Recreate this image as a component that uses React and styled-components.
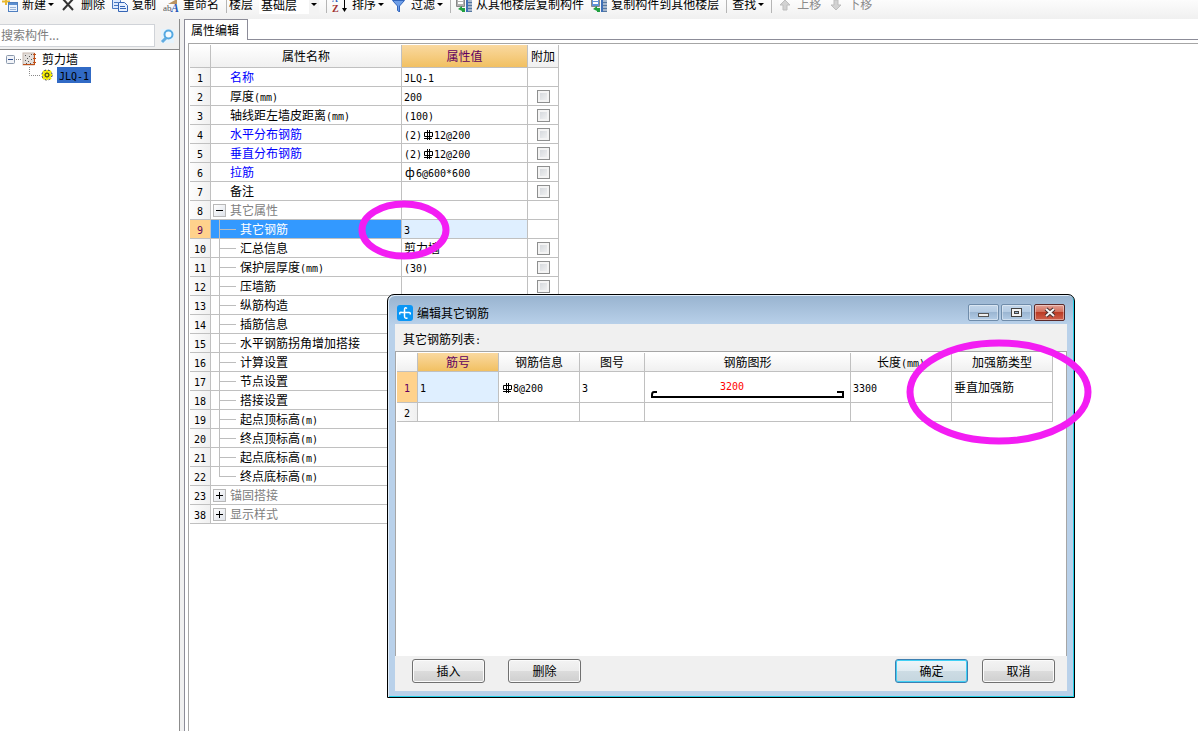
import React, { useState } from 'react';
import styled, { createGlobalStyle, css } from 'styled-components';

const GlobalStyle = createGlobalStyle`
  * {
    box-sizing: border-box;
  }

  body {
    margin: 0;
    overflow: hidden;
    background: #fff;
    color: #000;
    font-family: 'Noto Sans CJK SC', sans-serif;
    font-size: 12px;
    line-height: 18px;
  }

  button, input, select {
    font: inherit;
    color: inherit;
  }
`;

// Latin text and digits take half of the width of a Chinese character
const Half = styled.span`
  font-family: 'DejaVu Sans Mono', monospace;
  font-size: 10px;
  line-height: 10px;
`;

const Wide = styled.span`
  display: inline-block;
  width: 12px;
  text-align: center;
`;

const Page = styled.div`
  position: relative;
  display: flex;
  flex-direction: column;
  height: 100vh;
  overflow: hidden;
`;

// Toolbar
const Toolbar = styled.div`
  flex: none;
  display: flex;
  align-items: flex-start;
  gap: 7px;
  height: 25px;
  margin-top: -6px;
  padding: 1px 0 0 2px;
  background: linear-gradient(#fdfdfd 20%, #f0f0f0);
  white-space: nowrap;
`;

const ToolButton = styled.button`
  display: flex;
  align-items: center;
  gap: 4px;
  height: 18px;
  padding: 0;
  border: none;
  background: none;
  color: ${(p) => (p.disabled ? '#8a8a8a' : '#000')};

  svg {
    flex: none;
  }
`;

const Arrow = styled.span`
  margin-left: -2px;
  border: 3px solid transparent;
  border-top-color: #000;
  border-bottom: none;
`;

const Separator = styled.span`
  width: 1px;
  height: 18px;
  margin-right: -2px;
  background: #b5b5b5;
`;

const FloorField = styled.label`
  display: flex;
  gap: 6px;
  margin-left: -3px;
`;

const FloorBox = styled.span`
  display: flex;
  align-items: center;
  width: 60px;
  height: 19px;
  background: linear-gradient(90deg, #fff 50px, #f3f3f3 50px);
`;

const FloorSelect = styled.select`
  appearance: none;
  width: 54px;
  height: 18px;
  padding: 0 0 0 2px;
  border: none;
  background: none;
`;

// Main area
const Main = styled.div`
  flex: 1;
  display: flex;
  min-height: 0;
  background: #f0f0f0;
`;

const Sidebar = styled.aside`
  flex: none;
  display: flex;
  flex-direction: column;
  width: 180px;
  padding-top: 5px;
  border-right: 1px solid #8c8c8c;
`;

const SearchRow = styled.div`
  display: flex;
  height: 25px;
`;

const SearchInput = styled.input`
  width: 155px;
  height: 23px;
  padding: 0 0 2px 1px;
  border: 1px solid #d0d3d8;
  border-left: none;
  background: #fff;

  &::placeholder {
    color: #7d7d7d;
  }
`;

const SearchButton = styled.button`
  flex: 1;
  display: flex;
  align-items: center;
  padding: 0 0 2px 5px;
  border: none;
  background: none;
`;

const Tree = styled.ul`
  flex: 1;
  margin: 0;
  padding: 1px 0 0 6px;
  border-top: 1px solid #8c8c8c;
  background: #fff;
  list-style: none;
`;

const TreeItem = styled.li`
  display: flex;
  align-items: center;
  height: 16px;
  line-height: 16px;
`;

const TreeLabel = styled.span`
  margin-left: 4px;
  padding: 0 2px;
  background: ${(p) => (p.$selected ? '#316ac5' : 'none')};
`;

const Content = styled.section`
  flex: 1;
  display: flex;
  flex-direction: column;
  min-width: 0;
  margin-left: 4px;
  border-left: 1px solid #8c8c98;
  background: #fff;
`;

const TabBar = styled.div`
  flex: none;
  display: flex;
  height: 21px;

  &::after {
    content: '';
    flex: 1;
    border-bottom: 1px solid #8c8c98;
  }
`;

const Tab = styled.button`
  width: 63px;
  padding: 0 0 1px 6px;
  border: 1px solid #8c8c98;
  border-width: 1px 1px 0 0;
  background: #fff;
  text-align: left;
`;

const GridFrame = styled.div`
  flex: 1;
  margin: 3px 0 0 3px;
  padding: 1px 0 0 1px;
  border: 1px solid #a6a6a6;
  border-width: 1px 0 0 1px;
`;

// Tables
const Grid = styled.table`
  table-layout: fixed;
  width: ${(p) => p.$width}px;
  border-spacing: 0;
  background: #fff;
`;

const cell = css`
  padding: 0;
  border: 1px solid #c0c0c0;
  border-width: 0 1px 1px 0;
  font-weight: normal;
  white-space: nowrap;
  overflow: hidden;
`;

const HeadCell = styled.th`
  ${cell}
  height: ${(p) => p.$height}px;
  background: ${(p) => (p.$active ? 'linear-gradient(#fad9a0, #f1c062)' : 'linear-gradient(#fff, #f0f0f0)')};
  color: ${(p) => (p.$active ? '#600060' : '#000')};
`;

const RowHead = styled.th`
  ${cell}
  background: ${(p) => (p.$active ? '#ffd28c' : 'linear-gradient(90deg, #fdfdfd, #f0f0f0)')};
  color: ${(p) => (p.$active ? '#600060' : '#000')};
`;

const Cell = styled.td`
  ${cell}
  height: ${(p) => p.$height || 19}px;
  padding-left: 2px;
  background: ${(p) => (p.$active ? '#dfefff' : '#fff')};
`;

const NameCell = styled.td`
  ${cell}
  background: ${(p) => (p.$active ? '#3399ff' : '#fff')};
  color: ${(p) => p.$color};
`;

const NameBox = styled.div`
  display: flex;
  height: 18px;
  padding-left: ${(p) => p.$indent}px;
`;

const Branch = styled.span`
  width: 21px;
  background:
    linear-gradient(#bdbdbd, #bdbdbd) 0 0 / 1px ${(p) => (p.$last ? '9px' : '100%')} no-repeat,
    linear-gradient(#bdbdbd, #bdbdbd) 0 9px / 17px 1px no-repeat;
`;

const Expander = styled.button`
  display: flex;
  align-items: center;
  justify-content: center;
  width: 13px;
  height: 13px;
  margin: 3px 4px 0 0;
  padding: 0;
  border: 1px solid #b8b8b8;
  background: linear-gradient(135deg, #fff, #dfe3ea);
`;

const CheckCell = styled.td`
  ${cell}

  label {
    display: flex;
    justify-content: center;
  }
`;

const Check = styled.input`
  appearance: none;
  width: 13px;
  height: 13px;
  margin: 0;
  border: 1px solid #8e8f8f;
  background: linear-gradient(135deg, #cfd3d8, #f6f6f6);
  box-shadow: inset 0 0 0 2px #f4f4f4;

  &:checked {
    background: #3c6eb4;
  }
`;

const ShapeCell = styled.td`
  ${cell}

  svg {
    display: block;
  }
`;

// Dialog
const Dialog = styled.div`
  position: absolute;
  top: 294px;
  left: 387px;
  width: 688px;
  padding: 0 7px 6px;
  border: 1px solid #000;
  border-radius: 7px 7px 0 0;
  background: linear-gradient(#98b3cf, #b9d1ea 30px);
  box-shadow: inset 1px 1px 0 #e2eefa, inset -1px -1px 0 #22cfe8;
`;

const TitleBar = styled.div`
  display: flex;
  align-items: center;
  height: 29px;
  padding: 6px 2px 0 2px;
`;

const Title = styled.span`
  flex: 1;
  margin-left: 4px;
`;

const WindowButtons = styled.div`
  display: flex;
  gap: 2px;
`;

const WindowButton = styled.button`
  display: flex;
  align-items: center;
  justify-content: center;
  width: 31px;
  height: 17px;
  padding: 0;
  border: 1px solid ${(p) => (p.$close ? '#5b2a2a' : '#6f8caa')};
  border-radius: 2px;
  background: ${(p) =>
    p.$close
      ? 'linear-gradient(#e3a196, #d2705d 45%, #bb3b25 50%, #d0614d)'
      : 'linear-gradient(#c3d6ea, #b4cbe3 45%, #9bb6d2 50%, #b3cce6)'};
  box-shadow: inset 0 0 0 1px rgba(255, 255, 255, 0.4);
`;

const DialogBody = styled.div`
  background: #f0f0f0;
`;

const ListLabel = styled.div`
  height: 27px;
  padding: 6px 0 0 8px;
`;

const ListFrame = styled.div`
  min-height: 305px;
  padding: 1px 0 0 1px;
  border: 1px solid #a6a6a6;
  border-bottom: none;
  background: #fff;
`;

const Footer = styled.div`
  display: flex;
  gap: 23px;
  padding: 3px 12px 8px 17px;
`;

const FooterRight = styled.div`
  display: flex;
  gap: 14px;
  margin-left: auto;
`;

const Button = styled.button`
  width: 73px;
  height: 24px;
  padding: 0;
  border: 1px solid ${(p) => (p.$primary ? '#3c7fb1' : '#707070')};
  border-radius: 3px;
  background: ${(p) =>
    p.$primary
      ? 'linear-gradient(#eef5f9, #e0ebf1 49%, #cddce4 50%, #c5d6df)'
      : 'linear-gradient(#f3f3f3, #ebebeb 49%, #dcdcdc 50%, #cfcfcf)'};
  box-shadow: inset 0 0 0 1px ${(p) => (p.$primary ? '#3fd0f5' : '#fbfbfb')};
`;

const Marks = styled.svg`
  position: absolute;
  top: 0;
  left: 0;
  pointer-events: none;
`;

// Icons
const Icon = ({ children, size = 16 }) => (
  <svg width={size} height={size} viewBox={`0 0 ${size} ${size}`} aria-hidden="true">
    {children}
  </svg>
);

const NewIcon = () => (
  <Icon>
    <path d="M4 0v9M0 5.500h8" stroke="#e8b830" strokeWidth="2" />
    <rect x="6.500" y="6.500" width="9" height="9" fill="#eaf3ff" stroke="#4f7fc0" />
    <path d="M7 8h8" stroke="#5b8ed0" strokeWidth="2" />
    <path d="M8 11.500h6M8 13.500h6" stroke="#9ab4d8" />
  </Icon>
);

const DeleteIcon = () => (
  <Icon>
    <path d="M2 3l10 11M12 3L2 14" stroke="#333" strokeWidth="2" fill="none" />
  </Icon>
);

const CopyIcon = () => (
  <Icon>
    <path d="M.5 2.500h6l2 2v8h-8z" fill="#dceaff" stroke="#4a78c0" />
    <path d="M2 6.500h4M2 9.500h4" stroke="#4a78c0" />
    <path d="M6.500 6.500h6l3 3v6h-9z" fill="#e6f0ff" stroke="#3565b5" />
    <path d="M8 10.500h5M8 12.500h6" stroke="#3565b5" />
  </Icon>
);

const RenameIcon = () => (
  <Icon>
    <path d="M5 8l9-5v5z" fill="#b99362" />
    <text x="0" y="15" fontSize="9" fontFamily="Liberation Serif" fill="#555">ab</text>
    <text x="8" y="16" fontSize="12" fontWeight="bold" fontStyle="italic" fontFamily="Liberation Serif" fill="#2458b8">A</text>
  </Icon>
);

const SortIcon = () => (
  <Icon>
    <text x="0" y="6" fontSize="8" fontWeight="bold" fontFamily="Liberation Serif" fill="#2f5fb8">A</text>
    <text x="0" y="16" fontSize="10" fontWeight="bold" fontFamily="Liberation Serif" fill="#a03030">Z</text>
    <path d="M12.500 2v11" stroke="#000" />
    <path d="M10 12h5l-2.500 4z" />
  </Icon>
);

const FilterIcon = () => (
  <Icon>
    <path d="M1.500 4.500h12l-5 5.500v6l-2-1.500V10z" fill="#6f9fe8" stroke="#3266bd" />
  </Icon>
);

const FloorCopyIcon = ({ color }) => (
  <Icon>
    <path d="M.5 1.500h8v9h-8z" fill={color} stroke="#888" />
    <path d="M2 4h5M2 7h5" stroke="#fff" strokeWidth="2" />
    <path d="M2 13l4-3v2h3v4H6v-1z" fill="#20a040" />
    <path d="M11 1v15" stroke="#3f70b8" strokeWidth="2" />
    <path d="M12 3.500h4M12 6.500h4M12 9.500h4M12 12.500h4M12 15.500h4" stroke="#5577a0" strokeWidth="2" />
  </Icon>
);

const MoveIcon = ({ down }) => (
  <Icon>
    <path d={down ? 'M8 14l5-5h-3V4H6v5H3z' : 'M8 4l5 5h-3v5H6V9H3z'} fill="#d2d2d2" stroke="#bdbdbd" />
  </Icon>
);

const SearchIcon = () => (
  <Icon>
    <rect x="1" y="1" width="13" height="14" fill="#e6f3fc" />
    <path d="M2 14l4-4" stroke="#62ace0" strokeWidth="3" />
    <circle cx="8.500" cy="6.500" r="4" fill="#f4fbff" stroke="#55a9e2" strokeWidth="2" />
  </Icon>
);

const PlusMinus = ({ open }) => (
  <Icon size={9}>
    <path d={open ? 'M1 4.500h7' : 'M1 4.500h7M4.500 1v7'} stroke="#000" />
  </Icon>
);

const TreeToggle = () => (
  <svg width="16" height="16" viewBox="0 0 16 16" aria-hidden="true">
    <rect x=".5" y="4.500" width="8" height="8" rx="1" fill="#f2f4f8" stroke="#8a98ac" />
    <path d="M2 8.500h5" stroke="#2f4f8f" />
    <path d="M10 8.500h6" stroke="#888" strokeDasharray="1 1" />
  </svg>
);

const TreeLine = () => (
  <svg width="35" height="16" viewBox="0 0 35 16" aria-hidden="true">
    <path d="M23.500 0v8.500H35" fill="none" stroke="#888" strokeDasharray="1 1" />
  </svg>
);

const WallIcon = () => (
  <svg width="14" height="14" viewBox="0 0 14 14" aria-hidden="true">
    <rect x="1" y="1" width="11" height="12" fill="#e2dedb" stroke="#c9b9b0" />
    <path d="M3 3.500h1M7 4.500h1M5 6.500h1M9 7.500h1M3 8.500h1M6 9.500h1M4 11.500h1M8 11.500h1M9 2.500h1" stroke="#555" />
    <path d="M12.500 1v12M11 2.500h3M11 6.500h3M11 10.500h3M1 12.500h12" stroke="#c05018" />
  </svg>
);

const GearIcon = () => (
  <svg width="12" height="12" viewBox="0 0 12 12" aria-hidden="true">
    <circle cx="6" cy="6" r="4" fill="#f0e800" />
    <circle cx="6" cy="6" r="5" fill="none" stroke="#222" strokeWidth="1" strokeDasharray="2 2" />
    <path d="M6 1v2M6 9v2M1 6h2M9 6h2M2 2l2 2M10 2L8 4M2 10l2-2M10 10L8 8" stroke="#f0e800" strokeWidth="2" />
    <circle cx="6" cy="6" r="2" fill="#f0e800" stroke="#222" />
  </svg>
);

const AppIcon = () => (
  <Icon>
    <rect width="16" height="16" rx="3" fill="#0a96f5" />
    <path d="M10 3.500Q7.500 1.500 7.500 5v6q0 3 3 2M3 9.500Q2 6.500 5 7.500h7q2 0 1 2" fill="none" stroke="#fff" strokeWidth="1.500" />
  </Icon>
);

// Sign for the grade of a ribbed bar
const SignSvg = styled.svg`
  vertical-align: -2px;
`;

const RebarSign = () => (
  <SignSvg width="12" height="12" viewBox="0 0 12 12" role="img" aria-label="HRB">
    <path d="M5.500 1v10M7.500 1v10M2.500 3.500h8v4h-8zM2 9.500h8" fill="none" stroke="#000" />
  </SignSvg>
);

const RebarShape = () => (
  <svg width="100%" height="30" viewBox="0 0 205 30" role="img" aria-label="3200">
    <text x="75" y="18" fontSize="10" fontFamily="DejaVu Sans Mono" fill="#f00">3200</text>
    <path d="M12 20H9q-2 0-2 3v2h191v-5h-6" fill="none" stroke="#000" strokeWidth="2" />
  </svg>
);

// Sets the Latin parts of a text in half width
const mixed = (text) =>
  text.split(/([\x20-\x7e]+|ф)/).map((part, i) => {
    if (part === 'ф') return <Wide key={i}>ф</Wide>;
    if (/^[\x20-\x7e]+$/.test(part)) return <Half key={i}>{part}</Half>;
    return part;
  });

const ribbed = (before, after) => (
  <>
    {mixed(before)}
    <RebarSign />
    {mixed(after)}
  </>
);

const properties = [
  { no: 1, name: '名称', value: 'JLQ-1', blue: true },
  { no: 2, name: '厚度(mm)', value: '200', check: true },
  { no: 3, name: '轴线距左墙皮距离(mm)', value: '(100)', check: true },
  { no: 4, name: '水平分布钢筋', value: ribbed('(2)', '12@200'), blue: true, check: true },
  { no: 5, name: '垂直分布钢筋', value: ribbed('(2)', '12@200'), blue: true, check: true },
  { no: 6, name: '拉筋', value: 'ф6@600*600', blue: true, check: true },
  { no: 7, name: '备注', value: '', check: true },
  { no: 8, name: '其它属性', value: '', group: true, open: true },
  { no: 9, name: '其它钢筋', value: '3', child: true },
  { no: 10, name: '汇总信息', value: '剪力墙', child: true, check: true },
  { no: 11, name: '保护层厚度(mm)', value: '(30)', child: true, check: true },
  { no: 12, name: '压墙筋', value: '', child: true, check: true },
  { no: 13, name: '纵筋构造', value: '', child: true, check: true },
  { no: 14, name: '插筋信息', value: '', child: true, check: true },
  { no: 15, name: '水平钢筋拐角增加搭接', value: '', child: true, check: true },
  { no: 16, name: '计算设置', value: '', child: true },
  { no: 17, name: '节点设置', value: '', child: true },
  { no: 18, name: '搭接设置', value: '', child: true },
  { no: 19, name: '起点顶标高(m)', value: '', child: true, check: true },
  { no: 20, name: '终点顶标高(m)', value: '', child: true, check: true },
  { no: 21, name: '起点底标高(m)', value: '', child: true, check: true },
  { no: 22, name: '终点底标高(m)', value: '', child: true, check: true, last: true },
  { no: 23, name: '锚固搭接', value: '', group: true },
  { no: 38, name: '显示样式', value: '', group: true },
];

const SELECTED = 9;

function nameColor(row) {
  if (row.no === SELECTED) return '#fff';
  if (row.group) return '#808080';
  return row.blue ? '#0000ff' : '#000';
}

function PropertyRow({ row }) {
  const active = row.no === SELECTED;
  const indent = row.child ? 8 : row.group ? 2 : 19;
  return (
    <tr>
      <RowHead scope="row" $active={active}>{mixed(String(row.no))}</RowHead>
      <NameCell $active={active} $color={nameColor(row)}>
        <NameBox $indent={indent}>
          {row.child && <Branch $last={row.last} />}
          {row.group && (
            <Expander aria-label={row.name}>
              <PlusMinus open={row.open} />
            </Expander>
          )}
          <span>{mixed(row.name)}</span>
        </NameBox>
      </NameCell>
      <Cell $active={active}>{typeof row.value === 'string' ? mixed(row.value) : row.value}</Cell>
      <CheckCell>
        {row.check && (
          <label>
            <Check type="checkbox" aria-label={`附加 ${row.name}`} />
          </label>
        )}
      </CheckCell>
    </tr>
  );
}

function PropertyTable() {
  return (
    <Grid $width={369}>
      <colgroup>
        <col width="21" />
        <col width="191" />
        <col width="126" />
        <col width="31" />
      </colgroup>
      <thead>
        <tr>
          <HeadCell $height={23} />
          <HeadCell $height={23}>属性名称</HeadCell>
          <HeadCell $height={23} $active>属性值</HeadCell>
          <HeadCell $height={23}>附加</HeadCell>
        </tr>
      </thead>
      <tbody>
        {properties.map((row) => (
          <PropertyRow key={row.no} row={row} />
        ))}
      </tbody>
    </Grid>
  );
}

function RebarTable() {
  return (
    <Grid $width={656}>
      <colgroup>
        <col width="21" />
        <col width="81" />
        <col width="81" />
        <col width="65" />
        <col width="206" />
        <col width="101" />
        <col width="101" />
      </colgroup>
      <thead>
        <tr>
          <HeadCell $height={19} />
          <HeadCell $height={19} $active>筋号</HeadCell>
          <HeadCell $height={19}>钢筋信息</HeadCell>
          <HeadCell $height={19}>图号</HeadCell>
          <HeadCell $height={19}>钢筋图形</HeadCell>
          <HeadCell $height={19}>{mixed('长度(mm)')}</HeadCell>
          <HeadCell $height={19}>加强筋类型</HeadCell>
        </tr>
      </thead>
      <tbody>
        <tr>
          <RowHead scope="row" $active>{mixed('1')}</RowHead>
          <Cell $height={31} $active>{mixed('1')}</Cell>
          <Cell $height={31}>{ribbed('', '8@200')}</Cell>
          <Cell $height={31}>{mixed('3')}</Cell>
          <ShapeCell><RebarShape /></ShapeCell>
          <Cell $height={31}>{mixed('3300')}</Cell>
          <Cell $height={31}>垂直加强筋</Cell>
        </tr>
        <tr>
          <RowHead scope="row">{mixed('2')}</RowHead>
          <Cell />
          <Cell />
          <Cell />
          <Cell />
          <Cell />
          <Cell />
        </tr>
      </tbody>
    </Grid>
  );
}

function RebarDialog() {
  return (
    <Dialog role="dialog" aria-label="编辑其它钢筋">
      <TitleBar>
        <AppIcon />
        <Title>编辑其它钢筋</Title>
        <WindowButtons>
          <WindowButton aria-label="最小化">
            <svg width="12" height="11" viewBox="0 0 12 11">
              <rect x=".5" y="6.500" width="10" height="3" fill="#eee" stroke="#555" />
            </svg>
          </WindowButton>
          <WindowButton aria-label="最大化">
            <svg width="12" height="11" viewBox="0 0 12 11">
              <rect x=".5" y="1.500" width="10" height="8" fill="#f4f4f4" stroke="#444" />
              <rect x="3.500" y="4.500" width="4" height="2" fill="#9bb6d2" stroke="#444" />
            </svg>
          </WindowButton>
          <WindowButton $close aria-label="关闭">
            <svg width="12" height="11" viewBox="0 0 12 11">
              <path d="M2 2l8 7M10 2L2 9" stroke="#4a3030" strokeWidth="4" />
              <path d="M2 2l8 7M10 2L2 9" stroke="#f6f6f6" strokeWidth="2" />
            </svg>
          </WindowButton>
        </WindowButtons>
      </TitleBar>
      <DialogBody>
        <ListLabel>{mixed('其它钢筋列表:')}</ListLabel>
        <ListFrame>
          <RebarTable />
        </ListFrame>
        <Footer>
          <Button>插入</Button>
          <Button>删除</Button>
          <FooterRight>
            <Button $primary>确定</Button>
            <Button>取消</Button>
          </FooterRight>
        </Footer>
      </DialogBody>
    </Dialog>
  );
}

export default function App() {
  const [search, setSearch] = useState('');

  return (
    <Page>
      <GlobalStyle />
      <Toolbar>
        <ToolButton><NewIcon />新建<Arrow /></ToolButton>
        <ToolButton><DeleteIcon />删除</ToolButton>
        <ToolButton><CopyIcon />复制</ToolButton>
        <ToolButton><RenameIcon />重命名</ToolButton>
        <Separator />
        <FloorField>
          楼层
          <FloorBox>
            <FloorSelect defaultValue="基础层">
              <option>基础层</option>
            </FloorSelect>
            <Arrow />
          </FloorBox>
        </FloorField>
        <Separator />
        <ToolButton><SortIcon />排序<Arrow /></ToolButton>
        <ToolButton><FilterIcon />过滤<Arrow /></ToolButton>
        <Separator />
        <ToolButton><FloorCopyIcon color="#b0b0b0" />从其他楼层复制构件</ToolButton>
        <ToolButton><FloorCopyIcon color="#5f92d8" />复制构件到其他楼层</ToolButton>
        <Separator />
        <ToolButton>查找<Arrow /></ToolButton>
        <Separator />
        <ToolButton disabled><MoveIcon />上移</ToolButton>
        <ToolButton disabled><MoveIcon down />下移</ToolButton>
      </Toolbar>
      <Main>
        <Sidebar>
          <SearchRow>
            <SearchInput
              aria-label="搜索构件"
              placeholder="搜索构件..."
              value={search}
              onChange={(e) => setSearch(e.target.value)}
            />
            <SearchButton aria-label="搜索"><SearchIcon /></SearchButton>
          </SearchRow>
          <Tree>
            <TreeItem>
              <TreeToggle />
              <WallIcon />
              <TreeLabel>剪力墙</TreeLabel>
            </TreeItem>
            <TreeItem>
              <TreeLine />
              <GearIcon />
              <TreeLabel $selected>{mixed('JLQ-1')}</TreeLabel>
            </TreeItem>
          </Tree>
        </Sidebar>
        <Content>
          <TabBar>
            <Tab>属性编辑</Tab>
          </TabBar>
          <GridFrame>
            <PropertyTable />
          </GridFrame>
        </Content>
      </Main>
      <RebarDialog />
      <Marks width="1198" height="731" viewBox="0 0 1198 731" aria-hidden="true">
        <g fill="none" stroke="#f31df3" strokeWidth="7">
          <ellipse cx="404" cy="230" rx="42" ry="26" />
          <ellipse cx="999" cy="392" rx="89" ry="49" />
        </g>
      </Marks>
    </Page>
  );
}
